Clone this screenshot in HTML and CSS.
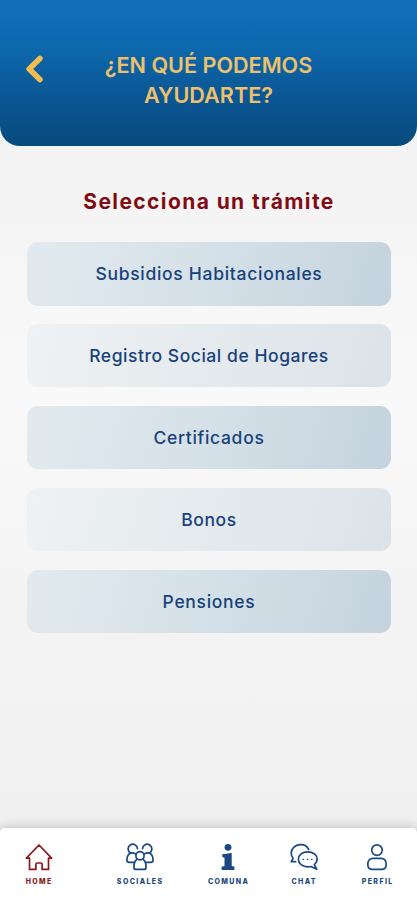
FILE: index.html
```html
<!DOCTYPE html>
<html lang="es">
<head>
    <meta charset="UTF-8">
    <meta name="viewport" content="width=device-width, initial-scale=1.0">
    <title>Trámites</title>
    <link rel="stylesheet" href="styles.css">
</head>
<body>
    <header class="header">
        <a class="back" href="#" aria-label="Volver">
            <svg width="18" height="28" viewBox="0 0 18 28">
                <path d="M14.9 3.4 4.2 14l10.7 10.6" />
            </svg>
        </a>
        <h1 class="title">¿EN QUÉ PODEMOS<br>AYUDARTE?</h1>
    </header>

    <main class="content">
        <h2 class="subtitle">Selecciona un trámite</h2>
        <div class="options">
            <a class="option" href="#">Subsidios Habitacionales</a>
            <a class="option light" href="#">Registro Social de Hogares</a>
            <a class="option" href="#">Certificados</a>
            <a class="option light" href="#">Bonos</a>
            <a class="option" href="#">Pensiones</a>
        </div>
    </main>

    <nav class="navbar">
        <a class="nav-item active" href="#">
            <svg class="icon" viewBox="0 0 28 28">
                <path d="M4.5 15.2H1.4L14 2l12.6 13.2h-3.1v11.2h-6.4v-5.1q0-1.3-1.3-1.3h-3.6q-1.3 0-1.3 1.3v5.1H4.5z" />
            </svg>
            <span>HOME</span>
        </a>
        <a class="nav-item" href="#">
            <svg class="icon" viewBox="0 0 28 28">
                <path d="M4.6 10.1a4.7 4.7 0 1 1 6.9-4.5M23.4 10.1a4.7 4.7 0 1 0-6.9-4.5" />
                <path d="M4.6 10.1C2.2 11.4.9 14 .9 17q0 2.3 2.2 2.3h4.7M23.4 10.1c2.4 1.3 3.7 3.9 3.7 6.9q0 2.3-2.2 2.3h-4.7" />
                <path d="M4.6 10.1q2.8-.6 5.3 1M23.4 10.1q-2.8-.6-5.3 1" />
                <circle cx="14" cy="12.8" r="4.1" />
                <path d="M10.9 16.4Q8 18.3 8 22.6v1.8q0 2 2 2h8q2 0 2-2v-1.8q0-4.3-2.9-6.2" />
            </svg>
            <span>SOCIALES</span>
        </a>
        <a class="nav-item" href="#">
            <svg class="icon solid" viewBox="0 0 28 28">
                <circle cx="14" cy="4.3" r="3.4" />
                <path d="M8.3 11.2 17.7 10v13l2.7.8V27H7.6v-3.2l2.9-.8v-8.2l-2.2-.8z" />
            </svg>
            <span>COMUNA</span>
        </a>
        <a class="nav-item" href="#">
            <svg class="icon" viewBox="0 0 28 28">
                <path d="M18.8 6.6C17.1 3.2 13.7 1.5 10.2 1.7 4.9 1.9 1.2 5.6 1.2 10.2q0 2.8 1.9 5.1L1.2 18.7h4.4" />
                <path d="M17.8 8.8c5.4 0 9.3 3.2 9.3 7.3 0 2.2-1 4.1-2.8 5.5l2.5 4.7-5.8-2.8c-1 .3-2.1.4-3.2.4-5.3 0-9.4-3.3-9.4-7.6s4.1-7.5 9.4-7.5z" />
                <path class="dots" d="M13 16.3h.6m3.6 0h.6m3.6 0h.6" />
            </svg>
            <span>CHAT</span>
        </a>
        <a class="nav-item" href="#">
            <svg class="icon" viewBox="0 0 28 28">
                <circle cx="14" cy="7.1" r="5.3" />
                <path d="M10 15.4h8c3.2 0 5.2 2.4 5.2 5.8 0 3.3-1.8 5.2-4.6 5.2H9.4c-2.8 0-4.6-1.9-4.6-5.2 0-3.4 2-5.8 5.2-5.8z" />
            </svg>
            <span>PERFIL</span>
        </a>
    </nav>
</body>
</html>
```

FILE: styles.css
```css
* {
    box-sizing: border-box;
}
body {
    display: flex;
    flex-direction: column;
    height: 900px;
    margin: 0;
    font-family: Inter, "Liberation Sans", sans-serif;
    background: linear-gradient(#f3f3f4 146px, #f9f9f9 400px, #f4f4f4 600px, #f0f0f1 820px);
}
a {
    text-decoration: none;
}

.header {
    display: grid;
    grid-template-columns: 52px 1fr 52px;
    height: 146px;
    padding-top: 50px;
    border-radius: 0 0 20px 20px;
    background: linear-gradient(#1170ba, #0d69ae 30%, #0b5796 65%, #074b7d);
}
.back {
    height: 28px;
    margin: 5px 0 0 25px;
}
.back svg {
    display: block;
    fill: none;
    stroke: #f3bd50;
    stroke-width: 5.6;
    stroke-linecap: round;
    stroke-linejoin: round;
}
.title {
    margin: 0;
    color: #edc16b;
    font-size: 21.6px;
    font-weight: 600;
    line-height: 30px;
    text-align: center;
    white-space: nowrap;
}

.content {
    flex: 1;
    padding: 40px 26px 0 27px;
}
.subtitle {
    margin: 0;
    color: #810c13;
    font-size: 21px;
    font-weight: 700;
    line-height: 32px;
    letter-spacing: 1.4px;
    text-align: center;
}
.options {
    display: grid;
    gap: 18.4px;
    margin-top: 24px;
}
.option {
    display: flex;
    align-items: center;
    justify-content: center;
    height: 63.5px;
    border-radius: 11px;
    color: #17427c;
    font-size: 17.5px;
    font-weight: 500;
    letter-spacing: 0.7px;
    background: linear-gradient(105deg, #e2eaef, #d4e0e7 52%, #c5d3de);
}
.option.light {
    letter-spacing: 0.55px;
    background: linear-gradient(105deg, #eef2f4, #e4e9ed 55%, #dce3e8);
}

.navbar {
    display: grid;
    grid-template-columns: 77px 125px 52px 99px 48px;
    height: 72px;
    padding-top: 15px;
    border-radius: 5px 5px 0 0;
    background: #fff;
    box-shadow: 0 0 12px rgba(0, 0, 0, 0.25);
}
.nav-item {
    display: flex;
    flex-direction: column;
    align-items: center;
    color: #1b4882;
    font-size: 7px;
    font-weight: 800;
    line-height: 9px;
    letter-spacing: 1.4px;
}
.nav-item span {
    /* trailing letter-spacing pushes the label off centre */
    margin-right: -1.4px;
}
.nav-item.active {
    color: #8b1820;
}
.icon {
    width: 28px;
    height: 28px;
    margin-bottom: 6px;
    fill: none;
    stroke: currentColor;
    stroke-width: 1.7;
    stroke-linejoin: round;
    stroke-linecap: round;
}
.icon.solid {
    fill: currentColor;
    stroke: none;
}
.dots {
    stroke-width: 1.3;
}
```
